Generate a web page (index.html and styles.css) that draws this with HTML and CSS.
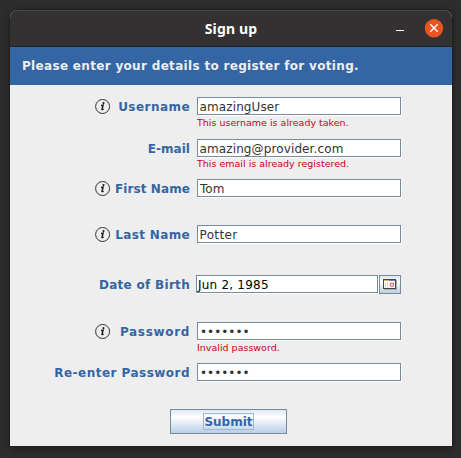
FILE: index.html
```
<!DOCTYPE html>
<html lang="en">
<head>
<meta charset="utf-8">
<title>Sign up</title>
<link rel="stylesheet" href="styles.css">
</head>
<body>
<svg class="defs" width="0" height="0">
  <symbol id="info" viewBox="0 0 16 16">
    <circle cx="7.6" cy="7.5" r="7" fill="none" stroke="#333" stroke-width="1"/>
    <circle cx="8.5" cy="4.1" r="1.1" fill="#222"/>
    <path d="M6 6.6L8.1 6.2L7 10.3Q6.9 11 8.6 10.1" fill="none" stroke="#222" stroke-width="1.5"/>
  </symbol>
</svg>
<main class="window">
  <header class="titlebar">
    <h1 class="title">Sign up</h1>
    <div class="controls">
      <span class="minimize"></span>
      <svg class="close" viewBox="0 0 20 20"><circle cx="10" cy="9.2" r="9.2" fill="#e95420"/><path d="M6.3 5.3L13.7 12.7M13.7 5.3L6.3 12.7" stroke="#fff" stroke-width="1.4"/></svg>
    </div>
  </header>
  <p class="banner"><span class="banner-text">Please enter your details to register for voting.</span></p>
  <form class="form">
    <div class="row username"><div class="label"><svg class="info"><use href="#info"/></svg><span class="t-username">Username</span></div><div><div class="field"><span class="v-user">amazingUser</span></div><p class="error e-user">This username is already taken.</p></div></div>
    <div class="row email"><div class="label"><span class="t-email">E-mail</span></div><div><div class="field"><span class="v-email">amazing@provider.com</span></div><p class="error e-email">This email is already registered.</p></div></div>
    <div class="row first"><div class="label"><svg class="info"><use href="#info"/></svg><span class="t-first">First Name</span></div><div class="field"><span class="v-first">Tom</span></div></div>
    <div class="row last"><div class="label"><svg class="info"><use href="#info"/></svg><span class="t-last">Last Name</span></div><div class="field"><span class="v-last">Potter</span></div></div>
    <div class="row birth"><div class="label"><span class="t-birth">Date of Birth</span></div><div class="date"><div class="field"><span class="v-date">Jun 2, 1985</span></div><div class="picker"><svg width="14" height="11" viewBox="0 0 14 11"><path d="M1 1H14V11H1Z" fill="#aaa"/><path d="M0 0H13V10H0Z" fill="#444"/><path d="M1 2H12V9H1Z" fill="#fff"/><path d="M1 1.5H6" stroke="#f0ac50"/><path d="M6 1.5H12" stroke="#6785b0"/><path d="M2.5 3V9M4.5 3V9" stroke="#ddd"/><circle cx="8.9" cy="5.8" r="1.7" fill="#fff" stroke="#ed6565" stroke-width="1.2"/></svg></div></div></div>
    <div class="row password"><div class="label"><svg class="info"><use href="#info"/></svg><span class="t-password">Password</span></div><div><div class="field"><span class="dots">•••••••</span></div><p class="error e-pass">Invalid password.</p></div></div>
    <div class="row repeat"><div class="label"><span class="t-repeat">Re-enter Password</span></div><div class="field"><span class="dots">•••••••</span></div></div>
    <button class="submit" type="button"><span class="submit-text">Submit</span></button>
  </form>
</main>
</body>
</html>
```
FILE: styles.css
```
* { box-sizing: border-box; }
body { margin: 0; width: 461px; height: 458px; padding: 10px 9px 12px 10px; overflow: hidden; background: #2d2d2d; font-family: "DejaVu Sans", sans-serif; font-size: 12px; }
h1, p { margin: 0; }
.defs { display: none; }
.window { width: 442px; height: 436px; border-radius: 8px 8px 0 0; background: #eee; box-shadow: 0 0 0 1px #202020, 0 2px 7px #1b1b1b; overflow: hidden; }
.titlebar { height: 37px; display: grid; grid-template-columns: 1fr auto 1fr; align-items: center; background: #333131; border-top: 1px solid #484646; border-bottom: 1px solid #202020; }
.title { grid-column: 2; font: bold 14px/16px "Noto Sans", sans-serif; color: #fff; letter-spacing: .15px; padding-top: 1px; }
.controls { display: flex; justify-content: flex-end; align-items: center; gap: 20px; padding-right: 8px; }
.minimize { width: 8px; height: 1px; margin-top: 4px; background: #fff; }
.close { width: 20px; height: 20px; }
.banner { height: 38px; padding-left: 12px; background: #3465a4; color: #eee; font-weight: bold; line-height: 38px; white-space: nowrap; }
.banner-text { letter-spacing: .32px; }
.form { padding-top: 12px; }
.row { display: grid; grid-template-columns: 180px 206px; column-gap: 7px; align-items: start; }
.username { height: 42px; }
.email { height: 40px; }
.first { height: 46px; }
.last { height: 50px; }
.birth { height: 47px; }
.password { height: 41px; }
.repeat { height: 46px; }
.label { height: 19px; display: flex; justify-content: flex-end; align-items: center; color: #3465a4; font-weight: bold; line-height: 19px; white-space: nowrap; letter-spacing: .3px; }
.label span { padding-top: 1px; }
.t-username { letter-spacing: .45px; }
.t-email { letter-spacing: .05px; }
.t-first { letter-spacing: .1px; }
.t-last { letter-spacing: .35px; }
.t-password { letter-spacing: .67px; }
.t-repeat { letter-spacing: .47px; }
.info { width: 16px; height: 16px; flex: none; margin: 0 auto 0 85px; }
.field { width: 204px; height: 18px; padding-left: 2px; background: #fff; border: 1px solid #7a8a99; box-shadow: 1px 1px 0 #fff; color: #333; line-height: 18px; white-space: nowrap; }
.v-user, .v-email { margin-left: -.5px; letter-spacing: .12px; }
.v-last { margin-left: -.5px; letter-spacing: .35px; }
.v-date { letter-spacing: .22px; }
.error { font-size: 9.5px; line-height: 15px; color: #cf0017; white-space: nowrap; }
.e-email { line-height: 13px; }
.date { display: flex; gap: 1px; margin-left: -1px; }
.date .field { width: 182px; padding-left: 1px; color: #000; }
.picker { width: 22px; height: 19px; display: grid; place-items: center; border: 1px solid #7a8a99; background: linear-gradient(#dce7f1, #fff 35%, #b8cfe5); }
.submit { display: flex; align-items: center; justify-content: center; width: 117px; height: 25px; margin: 0 0 0 160px; padding: 0; border: 1px solid #7a8a99; background: linear-gradient(#dde8f3, #fff 30%, #b8cfe5); color: #3465a4; font: bold 12px "DejaVu Sans", sans-serif; }
.submit-text { border: 1px solid #a3b8cc; height: 17px; line-height: 16px; width: 51px; }
```
